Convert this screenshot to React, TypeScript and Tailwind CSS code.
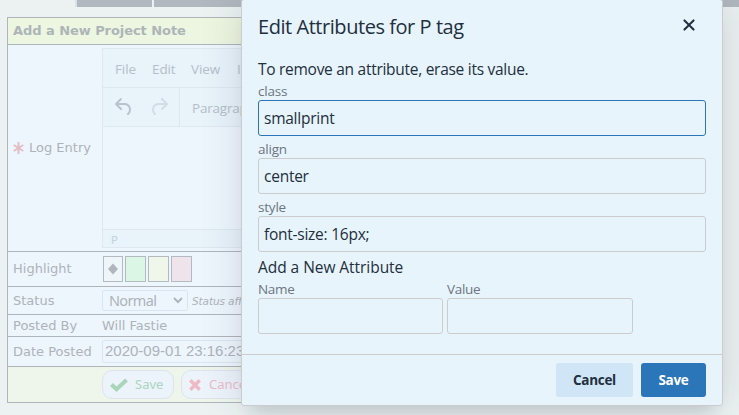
import type { ReactNode } from "react";

const ui = "font-['Open_Sans','Noto_Sans',sans-serif]";
const verdana = "font-['DejaVu_Sans',sans-serif]";

function Row({ label, height, children }: { label: ReactNode; height: string; children: ReactNode }) {
  return (
    <div className={`flex border-b border-[#b0b5bc] bg-[#eef6fd] ${height}`}>
      <div className="flex w-[94px] shrink-0 items-center pl-[5px] text-[13px] whitespace-nowrap text-[#adb3ba]">{label}</div>
      <div className="flex grow items-center whitespace-nowrap">{children}</div>
    </div>
  );
}

function Field({ label, value, active }: { label: string; value: string; active?: boolean }) {
  return (
    <div className="h-[58px]">
      <div className="h-[22px] pt-[5px] text-[13.5px] leading-[16px] tracking-[-0.2px] text-[#6c7682]">{label}</div>
      <div
        className={`flex h-9 items-center rounded-[3px] border pt-[2px] pl-[5px] text-[15.5px] tracking-[-0.25px] text-[#222f3e] ${
          active ? "border-[#2a76b8]" : "border-[#cccccc]"
        }`}
      >
        {value}
      </div>
    </div>
  );
}

function Editor() {
  return (
    <div className={`mt-[3px] h-[200px] w-[400px] self-start border border-[#dfe8ef] text-[#b5bfc9] ${ui}`}>
      <div className="flex h-[39px] items-center border-b border-[#dfe8ef] bg-[#e8f3fa] pt-[3px] pl-3 text-[13.5px] tracking-[-0.1px]">
        <span className="w-[37px]">File</span>
        <span className="w-[39px]">Edit</span>
        <span className="w-[46px]">View</span>
        <span>Insert</span>
      </div>
      <div className="flex h-[39px] border-b border-[#dfe8ef] bg-[#e8f3fa]">
        <div className="flex w-[77px] items-center gap-[11px] border-r border-[#dfe8ef] pl-[9px]">
          <svg width="24" height="24" viewBox="0 0 24 24" fill="#bac3cd">
            <path d="M6.4 8H12c3.7 0 6.2 2 6.8 5.1.6 2.7-.4 5.6-2.3 6.8a1 1 0 0 1-1-1.8c1.1-.6 1.8-2.7 1.4-4.6-.5-2.1-2.1-3.5-4.9-3.5H6.4l3.3 3.3a1 1 0 1 1-1.4 1.4l-5-5a1 1 0 0 1 0-1.4l5-5a1 1 0 0 1 1.4 1.4L6.4 8Z" />
          </svg>
          <svg width="24" height="24" viewBox="0 0 24 24" fill="#d2dde6">
            <path d="M17.6 10H12c-2.8 0-4.4 1.4-4.9 3.5-.4 2 .3 4 1.4 4.6a1 1 0 1 1-1 1.8c-2-1.2-2.9-4.1-2.3-6.8.6-3 3-5.1 6.8-5.1h5.6l-3.3-3.3a1 1 0 1 1 1.4-1.4l5 5a1 1 0 0 1 0 1.4l-5 5a1 1 0 0 1-1.4-1.4l3.3-3.3Z" />
          </svg>
        </div>
        <div className="flex items-center pt-0.5 pl-3 text-[13.5px] tracking-[-0.2px]">Paragraph</div>
      </div>
      <div className="h-[102px]" />
      <div className="flex h-[18px] items-center border-t border-[#dfe8ef] bg-[#e8f3fa] pt-[2px] pl-2 text-[11.5px] text-[#bfd0dc]">P</div>
    </div>
  );
}

function NoteForm() {
  return (
    <div className={`mt-[10px] ml-[7px] w-[600px] border-t border-l border-[#b0b5bc] ${verdana}`}>
      <div className="flex h-[27px] items-center border-b border-[#b0b5bc] bg-[#edf6e0] pl-[5px] text-[13px] font-bold tracking-[-0.06px] text-[#adb5b8]">
        Add a New Project Note
      </div>
      <Row
        height="h-[207px]"
        label={
          <div className="flex items-center">
            <svg className="mr-[5px]" width="11" height="12" viewBox="0 0 11 12" stroke="#e2bdc5" strokeWidth="2">
              <path d="M5.5 0v12M.7 3l9.6 6M.7 9l9.6-6" />
            </svg>
            Log Entry
          </div>
        }
      >
        <Editor />
      </Row>
      <Row height="h-[35px]" label="Highlight">
        <div className="ml-px flex h-[26px] gap-[2px]">
          <div className="flex w-5 items-center justify-center border border-[#b4bac2] bg-[#eef6f9]">
            <svg width="10" height="12" viewBox="0 0 10 12" fill="#b0b6be">
              <path d="M5 .5 10 6l-5 5.500L0 6Z" />
            </svg>
          </div>
          <div className="w-[21px] border border-[#b4bac2] bg-[#dcf6e5]" />
          <div className="w-[21px] border border-[#b4bac2] bg-[#eff7eb]" />
          <div className="w-[21px] border border-[#b4bac2] bg-[#efe4ec]" />
        </div>
      </Row>
      <Row height="h-[28px]" label="Status">
        <div className="flex h-[21px] w-[86px] items-center justify-between rounded-[2px] border border-[#d9e6f1] pr-1 pl-1.5 font-['Noto_Sans',sans-serif] text-[14.5px] tracking-[-0.65px] text-[#adb3ba]">
          Normal
          <svg width="10" height="7" viewBox="0 0 10 7" fill="none" stroke="#aeb5bd" strokeWidth="2">
            <path d="m1 1 4 4 4-4" />
          </svg>
        </div>
        <span className="ml-1 pt-[3px] text-[10.5px] tracking-[-0.1px] text-[#adb3ba] italic">Status affects</span>
      </Row>
      <Row height="h-[22px]" label="Posted By">
        <span className="text-[13px] text-[#adb3ba]">Will Fastie</span>
      </Row>
      <Row height="h-[30px]" label="Date Posted">
        <div className="flex h-[23px] w-[160px] items-center rounded-[2px] border border-[#d9e6f1] pl-[2px] font-['Liberation_Sans',sans-serif] text-[15px] text-[#adb3ba]">
          2020-09-01 23:16:23
        </div>
      </Row>
      <div className="flex h-9 items-center gap-[7px] border-b border-[#b0b5bc] bg-[#eef6ec] pl-[94px] font-['Noto_Sans',sans-serif] text-[13px]">
        <div className="flex h-[29px] w-[72px] items-center rounded-[10px] border border-[#e0e3ee] bg-[#edf3fb] pl-[7px] text-[#abd5bc]">
          <svg className="mr-[7px]" width="18" height="14" viewBox="0 0 18 14" fill="none" stroke="#a9d5b8" strokeWidth="4">
            <path d="m1.500 6.500 5 4.700L16.500 2" />
          </svg>
          Save
        </div>
        <div className="flex h-[29px] w-[84px] items-center rounded-[10px] border border-[#e0e3ee] bg-[#edf3fb] pl-[7px] text-[#ebbdca]">
          <svg className="mr-2" width="12" height="12" viewBox="0 0 12 12" stroke="#edbac6" strokeWidth="3.500">
            <path d="m1.300 1.300 9.400 9.400M10.700 1.300l-9.400 9.400" />
          </svg>
          Cancel
        </div>
      </div>
    </div>
  );
}

function AttributeDialog() {
  return (
    <div
      className={`absolute -top-px left-[241px] flex h-[407px] w-[482px] flex-col rounded-[3px] border border-[#cccccc] bg-[#e8f4fb] text-[#222f3e] shadow-[0_16px_16px_-10px_rgba(34,47,62,0.15),0_0_40px_1px_rgba(34,47,62,0.15)] ${ui}`}
    >
      <div className="flex h-[54px] items-center justify-between pr-[21px] pb-[4px] pl-4">
        <h1 className="pt-[3px] text-[20px] leading-[26px] tracking-[-0.45px]">Edit Attributes for P tag</h1>
        <svg width="24" height="24" viewBox="0 0 24 24" fill="#222f3e">
          <path d="M17.300 8.200 13.400 12l3.900 3.800a1 1 0 0 1-1.500 1.500L12 13.400l-3.800 3.900a1 1 0 0 1-1.500-1.500l3.900-3.800-3.900-3.800a1 1 0 0 1 1.500-1.500l3.800 3.900 3.800-3.900a1 1 0 0 1 1.500 1.500Z" />
        </svg>
      </div>
      <div className="h-[301px] border-b border-[#cccccc] px-4">
        <div className="h-6 text-[15.500px] leading-[30px] tracking-[-0.28px]">To remove an attribute, erase its value.</div>
        <Field label="class" value="smallprint" active />
        <Field label="align" value="center" />
        <Field label="style" value="font-size: 16px;" />
        <div className="h-6 text-[15.500px] leading-[30px] tracking-[-0.05px]">Add a New Attribute</div>
        <div className="flex gap-1 text-[13.500px] tracking-[-0.3px] text-[#6c7682]">
          <div>
            <div className="h-[22px] pt-[5px] leading-[16px]">Name</div>
            <div className="h-9 w-[185px] rounded-[3px] border border-[#cccccc]" />
          </div>
          <div>
            <div className="h-[22px] pt-[5px] leading-[16px]">Value</div>
            <div className="h-9 w-[186px] rounded-[3px] border border-[#cccccc]" />
          </div>
        </div>
      </div>
      <div className="flex grow items-center justify-end gap-2 pr-4 text-[13.500px] font-bold tracking-[-0.3px]">
        <button className="h-[34px] w-[77px] rounded-[3px] bg-[#d0e5f5]">Cancel</button>
        <button className="h-[34px] w-[65px] rounded-[3px] bg-[#2a76b8] text-white">Save</button>
      </div>
    </div>
  );
}

export default function App() {
  return (
    <div className="relative h-[415px] w-[739px] overflow-hidden bg-[#ecf2f2]">
      <div className="flex h-[7px] gap-[2px] pl-[75px]">
        <div className="w-[77px] border-l-2 border-[#dce2e6] bg-[#b1b8bf]" />
        <div className="grow bg-[#b1b8bf]" />
      </div>
      <NoteForm />
      <AttributeDialog />
    </div>
  );
}
